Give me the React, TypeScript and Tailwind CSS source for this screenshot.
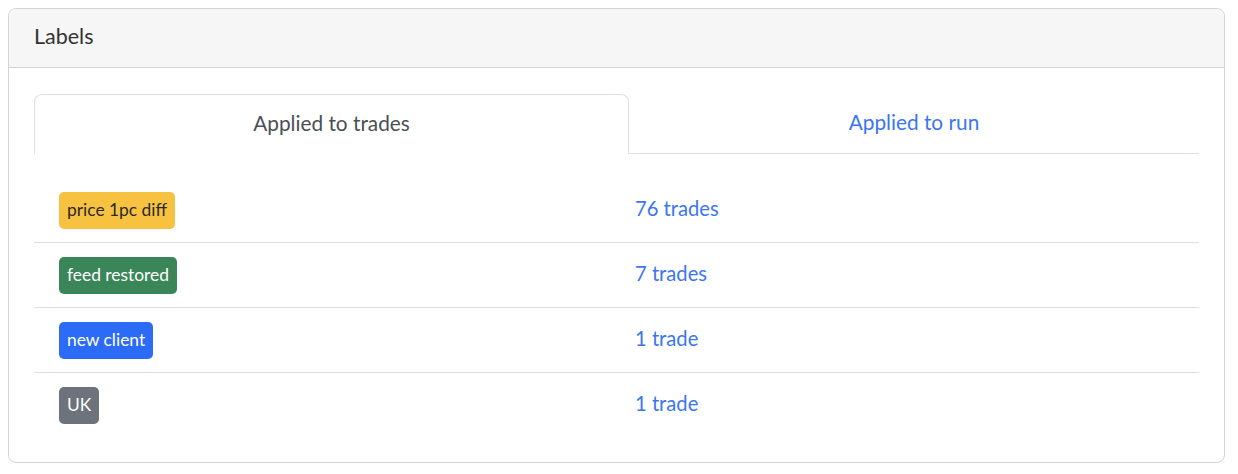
export default function App() {
  const rows = [
    { label: "price 1pc diff", cls: "bg-[#f7c240] text-[#2a2a2a]", count: "76 trades" },
    { label: "feed restored", cls: "bg-[#3b8658] text-white", count: "7 trades" },
    { label: "new client", cls: "bg-[#2c6bf5] text-white", count: "1 trade" },
    { label: "UK", cls: "bg-[#6c737b] text-white", count: "1 trade" },
  ];

  return (
    <div className="p-2 font-['Lato',sans-serif] text-[#333]">
      <div className="w-[1217px] rounded-lg border border-[#d4d4d4] bg-white">
        <div className="flex h-[59px] items-center rounded-t-lg border-b border-[#d4d4d4] bg-[#f6f6f6] px-[25px] pb-[3px] text-[21.5px]">
          Labels
        </div>
        <div className="px-[25px] pb-6 pt-[26px]">
          <div className="flex h-[60px]">
            <div className="flex w-[595px] items-center justify-center rounded-t-lg border border-b-0 border-[#dee2e6] pb-[4px] text-[20.8px] text-[#4a4f55]">
              Applied to trades
            </div>
            <div className="flex flex-1 items-center justify-center border-b border-[#dee2e6] pb-[3px] text-[20.8px] text-[#3b76f0]">
              Applied to run
            </div>
          </div>
          <div className="mt-6">
            {rows.map((r, i) => (
              <div
                key={r.label}
                className={`grid h-[65px] grid-cols-[576px_1fr] items-center ${i < rows.length - 1 ? "border-b border-[#dedede]" : ""}`}
              >
                <div className="pl-[25px]">
                  <span className={`inline-flex h-[37px] items-center rounded-[5px] px-2 text-[17.4px] ${r.cls}`}>
                    {r.label}
                  </span>
                </div>
                <div className="pl-[25px] pb-[4px] text-[20.2px] text-[#3b76f0]">{r.count}</div>
              </div>
            ))}
          </div>
        </div>
      </div>
    </div>
  );
}
